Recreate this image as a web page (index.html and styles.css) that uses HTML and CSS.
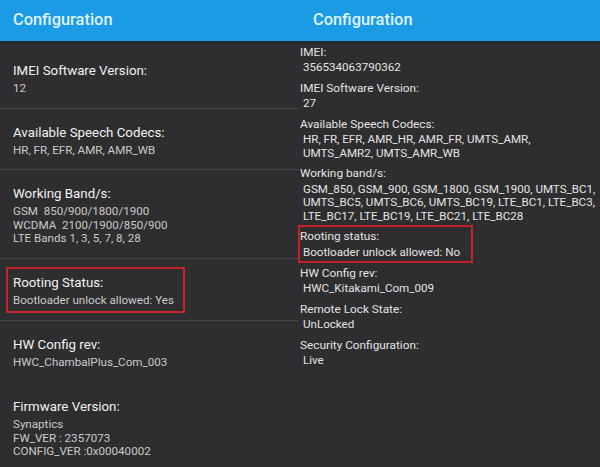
FILE: index.html
```html
<!DOCTYPE html>
<html>
<head>
<meta charset="utf-8">
<link rel="stylesheet" href="styles.css">
</head>
<body>
<div class="screen">
  <section class="panel left">
    <header class="bar"><h1>Configuration</h1></header>
    <ul class="prefs">
      <li class="pref first">
        <div class="t">IMEI Software Version:</div>
        <div class="v">12</div>
      </li>
      <li class="pref">
        <div class="t">Available Speech Codecs:</div>
        <div class="v">HR, FR, EFR, AMR, AMR_WB</div>
      </li>
      <li class="pref">
        <div class="t">Working Band/s:</div>
        <div class="v">GSM&nbsp; 850/900/1800/1900<br>WCDMA&nbsp; 2100/1900/850/900<br>LTE Bands 1, 3, 5, 7, 8, 28</div>
      </li>
      <li class="pref">
        <div class="hl hl-left">
          <div class="t">Rooting Status:</div>
          <div class="v">Bootloader unlock allowed: Yes</div>
        </div>
      </li>
      <li class="pref tall">
        <div class="t">HW Config rev:</div>
        <div class="v">HWC_ChambalPlus_Com_003</div>
      </li>
      <li class="pref nodiv">
        <div class="t">Firmware Version:</div>
        <div class="v">Synaptics<br>FW_VER : 2357073<br>CONFIG_VER :0x00040002</div>
      </li>
    </ul>
  </section>
  <section class="panel right">
    <header class="bar"><h1>Configuration</h1></header>
    <dl class="info">
      <div class="row"><dt>IMEI:</dt><dd>356534063790362</dd></div>
      <div class="row"><dt>IMEI Software Version:</dt><dd>27</dd></div>
      <div class="row"><dt>Available Speech Codecs:</dt><dd>HR, FR, EFR, AMR_HR, AMR_FR, UMTS_AMR,<br>UMTS_AMR2, UMTS_AMR_WB</dd></div>
      <div class="row"><dt>Working band/s:</dt><dd>GSM_850, GSM_900, GSM_1800, GSM_1900, UMTS_BC1,<br>UMTS_BC5, UMTS_BC6, UMTS_BC19, LTE_BC1, LTE_BC3,<br>LTE_BC17, LTE_BC19, LTE_BC21, LTE_BC28</dd></div>
      <div class="row"><div class="hl hl-right"><dt>Rooting status:</dt><dd>Bootloader unlock allowed: No</dd></div></div>
      <div class="row"><dt>HW Config rev:</dt><dd>HWC_Kitakami_Com_009</dd></div>
      <div class="row"><dt>Remote Lock State:</dt><dd>UnLocked</dd></div>
      <div class="row"><dt>Security Configuration:</dt><dd>Live</dd></div>
    </dl>
  </section>
</div>
</body>
</html>
```

FILE: styles.css
```css
* { box-sizing: border-box; }
html, body {
  margin: 0;
  padding: 0;
  background: #2e2d2f;
  font-family: Roboto, "Liberation Sans", sans-serif;
}
.screen {
  display: grid;
  grid-template-columns: 298px 302px;
  width: 600px;
  height: 467px;
  overflow: hidden;
  background: #2e2d2f;
}
.panel { min-width: 0; }
.bar {
  height: 44px;
  background: #1b9be3;
  border-bottom: 3px solid #1f2a34;
  display: flex;
  align-items: center;
  padding: 0 0 2px 13px;
}
.right .bar { padding-left: 15px; }
.bar h1 {
  margin: 0;
  font-size: 16.4px;
  font-weight: 500;
  color: #dff3ff;
  letter-spacing: 0;
}
.prefs {
  list-style: none;
  margin: 0;
  padding: 0;
}
.pref {
  padding: 15px 0 12px 13px;
  border-bottom: 1px solid #444346;
}
.pref.first { padding-top: 18px; }
.pref.tall { padding-bottom: 13px; border-bottom-color: transparent; }
.pref.nodiv { border-bottom: none; }
.t {
  font-size: 13.3px;
  line-height: 17px;
  color: #f2f2f2;
}
.v {
  margin-top: 3px;
  font-size: 11.6px;
  line-height: 13.5px;
  color: #cbcbcb;
}
.hl {
  border: 2px solid #c3242a;
}
.hl-left {
  display: inline-block;
  margin: -7px 0 -9px -7px;
  padding: 5px 9px 4px 5px;
}
.info {
  margin: 0;
  padding: 0.5px 0 0 2px;
  white-space: nowrap;
}
.row { margin-bottom: 6px; }
.row dt {
  font-size: 11.8px;
  line-height: 15px;
  color: #e4e4e4;
}
.row dd {
  margin: 1.5px 0 0 3px;
  font-size: 11.6px;
  line-height: 13.5px;
  color: #e4e4e4;
}
.hl-right {
  display: inline-block;
  margin: -4.5px 0 -4px -2px;
  padding: 2.5px 11px 2px 0;
}
```
